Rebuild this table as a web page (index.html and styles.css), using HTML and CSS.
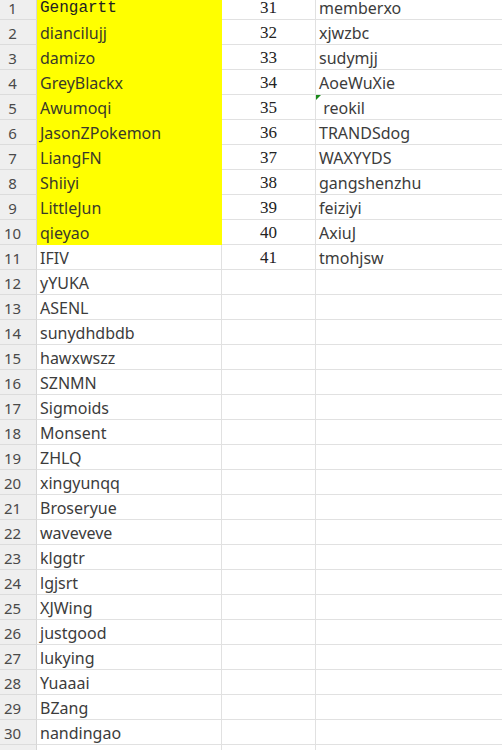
FILE: index.html
```html
<!DOCTYPE html>
<html>
<head>
<meta charset="utf-8">
<link rel="stylesheet" href="styles.css">
</head>
<body>
<div class="viewport">
<div class="sheet" id="sheet"></div>
</div>
<script>
const left = ["Gengartt","diancilujj","damizo","GreyBlackx","Awumoqi","JasonZPokemon","LiangFN","Shiiyi","LittleJun","qieyao","IFIV","yYUKA","ASENL","sunydhdbdb","hawxwszz","SZNMN","Sigmoids","Monsent","ZHLQ","xingyunqq","Broseryue","waveveve","klggtr","lgjsrt","XJWing","justgood","lukying","Yuaaai","BZang","nandingao",""];
const right = ["memberxo","xjwzbc","sudymjj","AoeWuXie","\u00a0reokil","TRANDSdog","WAXYYDS","gangshenzhu","feiziyi","AxiuJ","tmohjsw"];
const sheet = document.getElementById('sheet');
for (let i = 0; i < 31; i++) {
  const h = document.createElement('div');
  h.className = 'cell head';
  h.textContent = i + 1;
  sheet.appendChild(h);
  const b = document.createElement('div');
  b.className = 'cell name' + (i < 10 ? ' hl' : '') + (i === 0 ? ' mono' : '');
  b.textContent = left[i];
  sheet.appendChild(b);
  const c = document.createElement('div');
  c.className = 'cell num';
  c.textContent = i < 11 ? 31 + i : '';
  sheet.appendChild(c);
  const d = document.createElement('div');
  d.className = 'cell name last' + (i === 4 ? ' flag' : '');
  d.textContent = i < 11 ? right[i] : '';
  sheet.appendChild(d);
}
</script>
</body>
</html>
```
FILE: styles.css
```css
html, body {
  margin: 0;
  padding: 0;
  background: #ffffff;
}
.viewport {
  width: 502px;
  height: 750px;
  overflow: hidden;
}
.sheet {
  display: grid;
  grid-template-columns: 37px 185px 94px 190px;
  grid-template-rows: 20px;
  grid-auto-rows: 25px;
}
.cell {
  box-sizing: border-box;
  border-right: 1px solid #e1e1e1;
  border-bottom: 1px solid #e1e1e1;
  display: flex;
  align-items: flex-end;
  padding-bottom: 3px;
  line-height: 16px;
  white-space: nowrap;
  color: #333;
}
.head {
  background: #efefef;
  border-right-color: #d6d6d6;
  border-bottom-color: #dcdcdc;
  justify-content: center;
  padding-right: 11px;
  font-family: "Noto Sans", sans-serif;
  font-size: 15px;
  color: #4a4a4a;
}
.name {
  padding-left: 3px;
  font-family: "Noto Sans", sans-serif;
  font-size: 16px;
  color: #3c3c3c;
}
.hl {
  background: #ffff00;
  border-bottom-color: #ffff00;
  border-right-color: #ffff00;
  color: #3a3a2a;
}
.mono {
  font-family: "Liberation Mono", monospace;
  font-size: 16px;
  font-weight: normal;
  color: #222;
}
.num {
  justify-content: center;
  font-family: "Liberation Serif", serif;
  font-size: 17px;
  color: #222;
}
.last {
  border-right: none;
}
.flag {
  position: relative;
}
.flag::before {
  content: "";
  position: absolute;
  left: 0;
  top: 0;
  border-top: 5px solid #1a8a1a;
  border-right: 5px solid transparent;
}
```
